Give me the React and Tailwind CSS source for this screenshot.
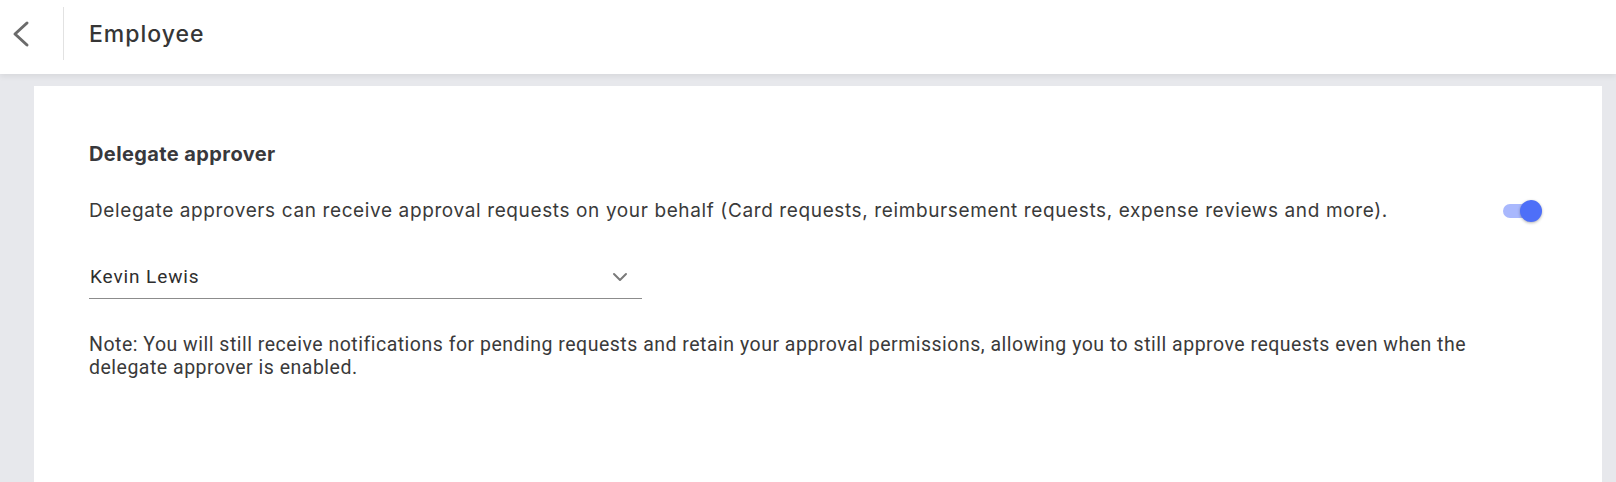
import React from "react";

export default function App() {
  return (
    <div className="w-[1616px] h-[482px] overflow-hidden bg-white flex flex-col" style={{ fontFamily: "Inter, 'Noto Sans', sans-serif" }}>
      <header className="relative z-10 h-[74px] shrink-0 bg-white flex shadow-[0_2px_6px_rgba(0,0,0,0.08)]">
        <div className="w-[63px] h-[68px] flex items-center pl-[10px]">
          <svg width="22" height="28" viewBox="0 0 22 28" fill="none">
            <path d="M17 3 L5 14 L17 25" stroke="#6b6b6b" strokeWidth="3" strokeLinecap="round" strokeLinejoin="round" />
          </svg>
        </div>
        <div className="w-px h-[53px] mt-[7px] bg-[#e2e2e2]" />
        <div className="h-[68px] flex items-center">
          <h1 className="ml-[25px] text-[23px] tracking-[1px] font-medium text-[#363636] leading-none">Employee</h1>
        </div>
      </header>
      <main className="flex-1 bg-[#e7e8ec] pl-[34px] pr-[14px] pt-[12px] flex">
        <section className="flex-1 bg-white pl-[55px] pr-[60px] pt-[56px]">
          <h2 className="text-[20px] tracking-[0.4px] font-bold text-[#38383c] leading-[24px]">Delegate approver</h2>
          <div className="mt-[33px] h-[24px] flex items-center justify-between">
            <p className="text-[19px] tracking-[0.62px] text-[#3a3a3a] leading-[24px] whitespace-nowrap">
              Delegate approvers can receive approval requests on your behalf (Card requests, reimbursement requests, expense reviews and more).
            </p>
            <div className="relative w-[40px] h-[24px] flex items-center">
              <div className="ml-[1px] w-[29px] h-[14px] rounded-full bg-[#a9b8fd]" />
              <div className="absolute left-[18px] top-[1px] w-[22px] h-[22px] rounded-full bg-[#4e6ff8] shadow-[0_1px_3px_rgba(0,0,0,0.3)]" />
            </div>
          </div>
          <div className="mt-[33px] w-[553px] h-[43px] border-b border-[#8c8c8c] flex items-center justify-between pl-[1px] pr-[14px]" style={{ fontFamily: "Roboto, sans-serif" }}>
            <span className="text-[19px] tracking-[0.9px] text-[#2e2e2e]">Kevin Lewis</span>
            <svg width="16" height="10" viewBox="0 0 16 10" fill="none">
              <path d="M2 2 L8 8 L14 2" stroke="#7a7a7a" strokeWidth="2" strokeLinecap="round" strokeLinejoin="round" />
            </svg>
          </div>
          <p className="mt-[34px] text-[19.5px] tracking-[0.5px] text-[#3a3a3a] leading-[23px] max-w-[1420px]" style={{ fontFamily: "Roboto, sans-serif" }}>
            Note: You will still receive notifications for pending requests and retain your approval permissions, allowing you to still approve requests even when the delegate approver is enabled.
          </p>
        </section>
      </main>
    </div>
  );
}
